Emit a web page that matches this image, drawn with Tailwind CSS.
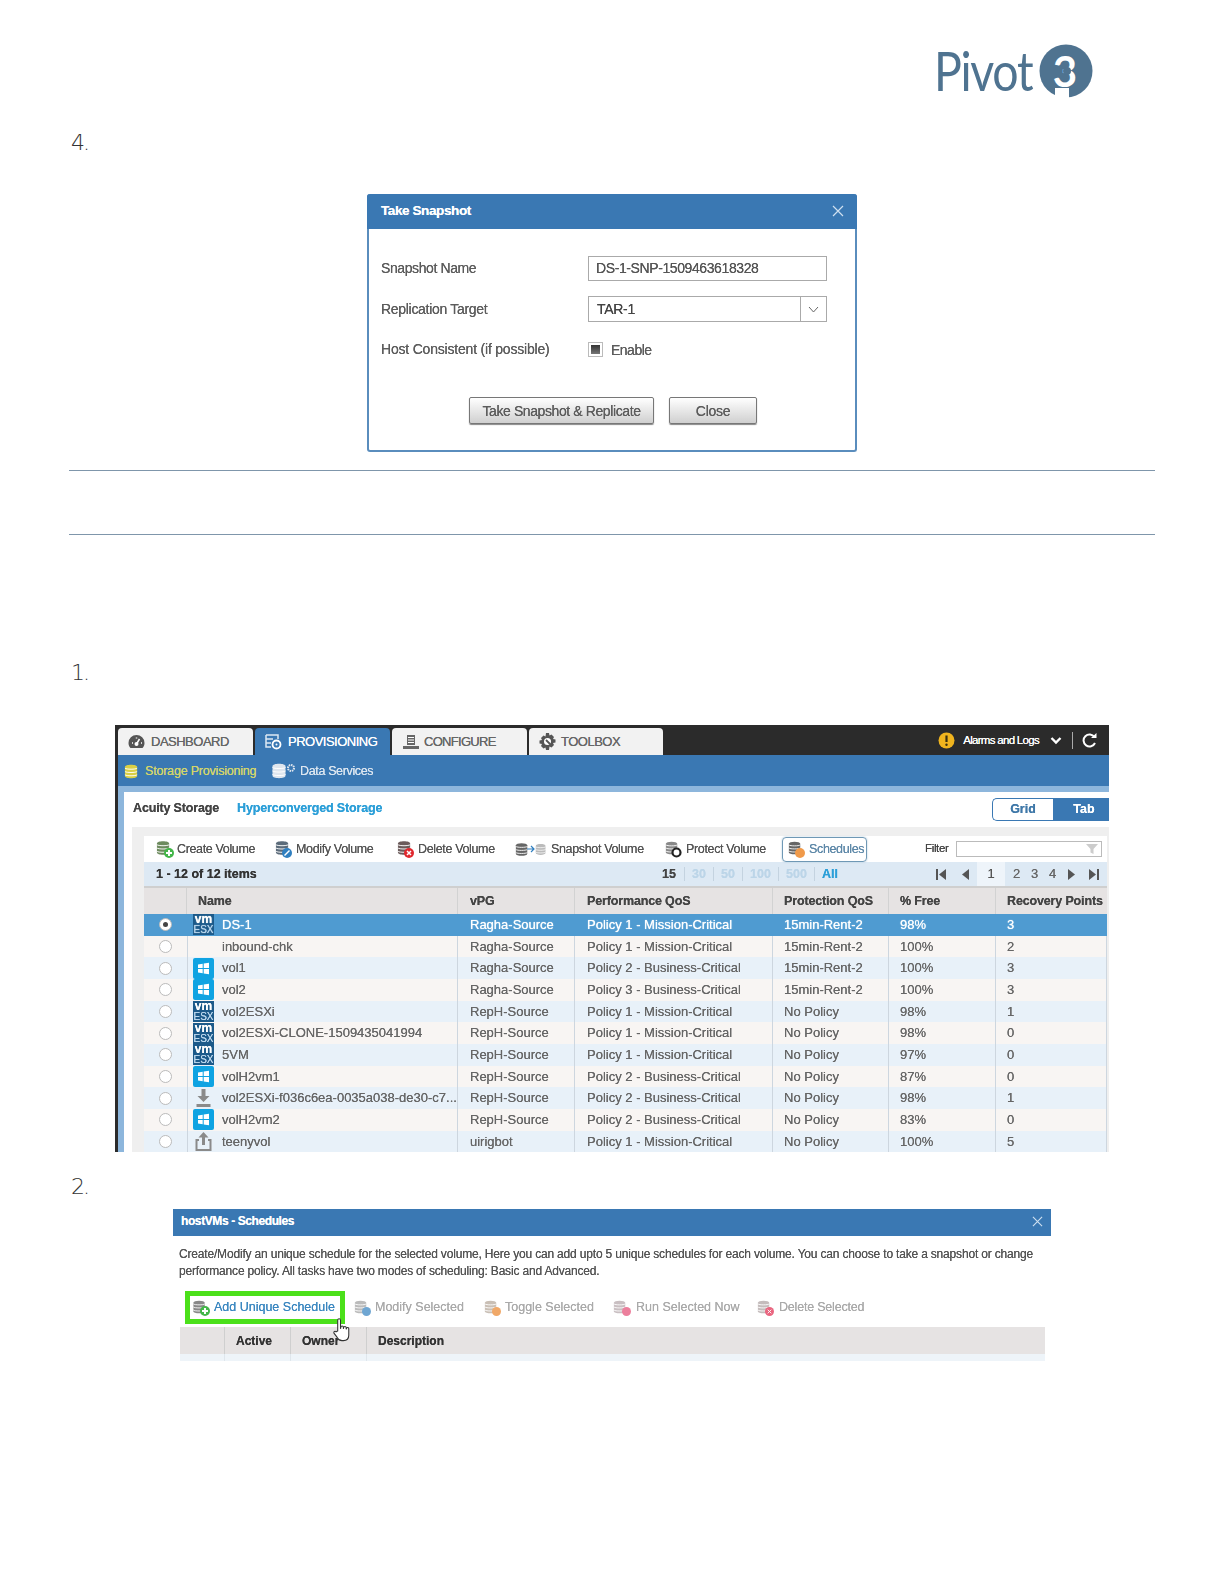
<!DOCTYPE html>
<html lang="en">
<head>
<meta charset="UTF-8">
<title>Pivot3 - Take Snapshot</title>
<script src="https://cdn.jsdelivr.net/npm/@tailwindcss/browser@4"></script>
</head>
<body class="bg-white font-['Liberation_Sans',Arial,sans-serif]">

<!-- shared icon shapes -->
<svg class="hidden" xmlns="http://www.w3.org/2000/svg">
  <symbol id="db" viewBox="0 0 16 16">
    <path fill="currentColor" d="M1 3.200C1 1.700 4 .8 7.500.8S14 1.700 14 3.200v9.600c0 1.500-3 2.400-6.500 2.400S1 14.300 1 12.800z"/>
    <path fill="none" stroke="#fff" stroke-width="1" d="M1 4.500c1.500 1.400 11.500 1.400 13 0M1 8c1.500 1.400 11.500 1.400 13 0M1 11.500c1.500 1.400 11.500 1.400 13 0"/>
  </symbol>
  <symbol id="win" viewBox="0 0 21 21">
    <rect width="21" height="21" rx="2" fill="#0fa3e2"/>
    <path fill="#fff" d="M5 6.500l4.700-.7v4.200H5zM10.700 5.600l5.300-.8v5.200h-5.300zM5 11h4.700v4.200L5 14.500zM10.700 11H16v5.200l-5.300-.8z"/>
  </symbol>
</svg>

<!-- logo -->
<div class="flex justify-end pt-[44px] pr-[131px] h-[98px]">
  <div class="flex items-center h-[54px]">
    <span class="font-['Lato',sans-serif] text-[54px] leading-none text-[#4f7390] tracking-[-1.5px] scale-x-[0.86] origin-right mr-[7px]">Pivot</span>
    <svg class="w-[54px] h-[54px]" viewBox="0 0 54 54">
      <circle cx="27" cy="27" r="26.500" fill="#4f7390"/>
      <rect x="16" y="44" width="14" height="10" fill="#fff"/>
      <text x="26" y="43" text-anchor="middle" font-family="Lato, sans-serif" font-weight="700" font-size="42" fill="#fff">3</text>
      <circle cx="28" cy="27" r="4" fill="#4f7390"/>
    </svg>
  </div>
</div>

<div class="mt-[30px] ml-[71px] h-[30px] text-[22px] leading-[30px] tracking-[-2px] text-[#333] font-['DejaVu_Sans',sans-serif] font-extralight">4.</div>

<!-- take snapshot dialog -->
<div class="mt-[36px] ml-[367px] w-[490px] h-[258px] border-x-2 border-b-2 border-[#5a8dbd] rounded-[3px] blur-[0.35px] text-[#5c5c5c] text-[14px] tracking-[-0.3px] [text-shadow:0_0_0.5px_currentColor]">
  <div class="-mx-[2px] h-[35px] bg-[#3a78b3] rounded-t-[3px] flex items-center justify-between pl-[14px] pr-[13px]">
    <span class="text-white font-bold text-[13.5px] tracking-[-0.4px]">Take Snapshot</span>
    <svg class="w-[12px] h-[12px] -mt-[2px]" viewBox="0 0 12 12"><path d="M1 1l10 10M11 1L1 11" stroke="#cfe0f0" stroke-width="1.200"/></svg>
  </div>
  <div class="pl-[12px]">
    <div class="flex items-center mt-[27px] h-[25px]">
      <span class="w-[207px] tracking-[-0.4px]">Snapshot Name</span>
      <div class="w-[239px] h-[25px] border border-[#aaa] flex items-center pl-[7px] pb-[1px] text-[#555] tracking-[-0.4px]">DS-1-SNP-1509463618328</div>
    </div>
    <div class="flex items-center mt-[15px] h-[26px]">
      <span class="w-[207px]">Replication Target</span>
      <div class="w-[239px] h-[26px] border border-[#aaa] flex items-center pl-[8px] text-[#444]">
        <span class="flex-1">TAR-1</span>
        <div class="w-[26px] h-full border-l border-[#aaa] flex items-center justify-center">
          <svg class="w-[11px] h-[7px]" viewBox="0 0 11 7"><path d="M1 1l4.500 5L10 1" fill="none" stroke="#666"/></svg>
        </div>
      </div>
    </div>
    <div class="flex items-center mt-[20px] h-[15px]">
      <span class="w-[207px] -mt-[1px] tracking-[-0.2px]">Host Consistent (if possible)</span>
      <div class="w-[15px] h-[15px] border border-[#bbb] p-[2px] bg-white"><div class="w-full h-full bg-gradient-to-b from-[#333] to-[#777]"></div></div>
      <span class="ml-[8px] mt-[1px] tracking-[-0.5px]">Enable</span>
    </div>
    <div class="flex mt-[40px]">
      <div class="ml-[88px] w-[185px] h-[27px] pt-[1px] border border-[#777] rounded-[2px] bg-gradient-to-b from-white to-[#d0d0d0] shadow-[0_1px_1px_#888] flex items-center justify-center tracking-[-0.4px]">Take Snapshot &amp; Replicate</div>
      <div class="ml-[15px] w-[88px] h-[27px] pt-[1px] border border-[#777] rounded-[2px] bg-gradient-to-b from-white to-[#d0d0d0] shadow-[0_1px_1px_#888] flex items-center justify-center">Close</div>
    </div>
  </div>
</div>

<div class="mt-[18px] mx-[69px] border-t border-[#7f96ab]"></div>
<div class="mt-[63px] mx-[69px] border-t border-[#7f96ab]"></div>

<div class="mt-[123px] ml-[71px] h-[30px] text-[22px] leading-[30px] tracking-[-2px] text-[#333] font-['DejaVu_Sans',sans-serif] font-extralight">1.</div>

<!-- provisioning screenshot -->
<div class="mt-[37px] ml-[115px] w-[994px] h-[427px] border-l-[3px] border-[#2b2b2b] flex flex-col overflow-hidden blur-[0.35px] text-[13px] text-[#555] [text-shadow:0_0_0.5px_currentColor]">
  <div class="h-[30px] shrink-0 bg-[#2b2b2b] flex items-end text-[13px] tracking-[-0.5px] text-[#666]">
    <div class="w-[135px] h-[27px] bg-[#f2f2f2] rounded-t-[4px] flex items-center pl-[10px] gap-[6px]">
      <svg class="w-[17px] h-[15px]" viewBox="0 0 17 15"><path fill="#555" d="M8.500 1a8 8 0 0 0-8 8c0 2 .7 3.800 2 5h12c1.300-1.200 2-3 2-5a8 8 0 0 0-8-8z"/><path stroke="#fff" stroke-width="1.500" d="M8.500 10l3-5M4 9h1M13 9h1M8.500 3.500v1"/><circle cx="8.500" cy="10" r="2" fill="#fff"/></svg>
      <span>DASHBOARD</span>
    </div>
    <div class="ml-[2px] w-[135px] h-[27px] bg-[#3a78b3] rounded-t-[4px] flex items-center pl-[10px] gap-[6px] text-white">
      <svg class="w-[17px] h-[16px]" viewBox="0 0 17 16"><path fill="none" stroke="#dce8f3" stroke-width="1.500" d="M1 1h12v4M1 1v12h5M1 5h7M1 9h5"/><circle cx="11.500" cy="10.500" r="4" fill="none" stroke="#fff" stroke-width="1.800"/><circle cx="11.500" cy="10.500" r="1" fill="#fff"/></svg>
      <span>PROVISIONING</span>
    </div>
    <div class="ml-[2px] w-[135px] h-[27px] bg-[#f2f2f2] rounded-t-[4px] flex items-center pl-[10px] gap-[5px]">
      <svg class="w-[17px] h-[16px]" viewBox="0 0 17 16"><path fill="#666" d="M5 1h8v10H5zM1 12h16v3H1z"/><path stroke="#fff" d="M6 3.500h6M6 6h6M6 8.500h6"/></svg>
      <span class="tracking-[-0.7px]">CONFIGURE</span>
    </div>
    <div class="ml-[2px] w-[134px] h-[27px] bg-[#f2f2f2] rounded-t-[4px] flex items-center pl-[10px] gap-[5px]">
      <svg class="w-[17px] h-[17px]" viewBox="0 0 17 17"><path fill="#555" d="M7 0h3l.5 2.500 2-1 2.500 2.500-1 2 2.500.5v3l-2.500.5 1 2-2.500 2.500-2-1L10 17H7l-.5-2.500-2 1L2 13l1-2-2.500-.5v-3L3 7 2 5l2.500-2.500 2 1z"/><circle cx="8.500" cy="8.500" r="3.500" fill="#fff"/><path stroke="#555" stroke-width="1.800" d="M7 7l5 5"/></svg>
      <span>TOOLBOX</span>
    </div>
    <div class="flex-1 h-full flex items-center justify-end text-white text-[11.500px] tracking-[-0.7px] pr-[12px]">
      <svg class="w-[17px] h-[17px]" viewBox="0 0 17 17"><circle cx="8.500" cy="8.500" r="8" fill="#f0b41e"/><path stroke="#3a2f10" stroke-width="2.200" d="M8.500 3.500v6.500"/><circle cx="8.500" cy="12.800" r="1.200" fill="#3a2f10"/></svg>
      <span class="ml-[8px] mt-[1px]">Alarms and Logs</span>
      <svg class="ml-[11px] w-[12px] h-[9px]" viewBox="0 0 12 9"><path d="M1.500 2L6 6.500 10.500 2" fill="none" stroke="#fff" stroke-width="2.400"/></svg>
      <div class="ml-[10px] w-px h-[17px] bg-[#aaa]"></div>
      <svg class="ml-[9px] w-[15px] h-[15px]" viewBox="0 0 15 15"><path d="M12.500 4A6 6 0 1 0 13 10" fill="none" stroke="#fff" stroke-width="2"/><path fill="#fff" d="M9 5h5.500V0z"/></svg>
    </div>
  </div>
  <div class="h-[31px] shrink-0 bg-[#3a78b3] flex items-center pl-[6px] pt-[1px] text-[12.5px] tracking-[-0.2px]">
    <svg class="w-[15px] h-[17px] text-[#d9cf45]"><use href="#db"/></svg>
    <span class="ml-[6px] w-[125px] text-[#d3d56b]">Storage Provisioning</span>
    <svg class="w-[19px] h-[16px] text-[#dfe6ee]"><use href="#db"/></svg>
    <svg class="-ml-[3px] -mt-[6px] w-[10px] h-[10px]" viewBox="0 0 10 10"><circle cx="5" cy="5" r="3" fill="none" stroke="#dfe6ee" stroke-width="2" stroke-dasharray="1.500 .8"/></svg>
    <span class="ml-[4px] tracking-[-0.35px] text-[#dce6f0]">Data Services</span>
  </div>
  <div class="h-[6px] shrink-0 bg-[#8db6dc]"></div>
  <div class="flex-1 flex min-h-0">
    <div class="w-[6px] bg-[#8db6dc]"></div>
    <div class="flex-1 bg-white flex flex-col min-w-0">
      <div class="h-[35px] shrink-0 flex items-center pl-[9px] font-bold text-[12.5px]">
        <span class="-mt-[3px] tracking-[-0.15px] text-[#444] w-[104px]">Acuity Storage</span>
        <span class="-mt-[3px] tracking-[-0.15px] text-[#2c9fd8]">Hyperconverged Storage</span>
        <div class="ml-auto flex h-[23px] text-[#3f78a8]">
          <div class="w-[61px] border border-r-0 border-[#3a78b3] rounded-l-[5px] flex items-center justify-center">Grid</div>
          <div class="w-[56px] pl-[6px] bg-[#3a78b3] text-white flex items-center justify-center">Tab</div>
        </div>
      </div>
      <div class="flex-1 bg-[#efefef] ml-[8px] pl-[12px] pr-[2px] pt-[9px] min-h-0">
        <div class="h-[26px] bg-white flex items-center pl-[12px] text-[#555] text-[12.5px] tracking-[-0.35px]">
          <div class="w-[119px] flex items-center gap-[3px]"><span class="relative w-[18px] h-[18px]"><svg class="w-[15px] h-[16px] text-[#6d8a5e]"><use href="#db"/></svg><svg class="absolute right-0 bottom-0 w-[10px] h-[10px]" viewBox="0 0 10 10"><circle cx="5" cy="5" r="5" fill="#43b649"/><path stroke="#fff" stroke-width="2" d="M5 2v6M2 5h6"/></svg></span>Create Volume</div>
          <div class="w-[122px] flex items-center gap-[4px]"><span class="relative w-[17px] h-[18px]"><svg class="w-[15px] h-[16px] text-[#5b6b7a]"><use href="#db"/></svg><svg class="absolute right-0 bottom-0 w-[10px] h-[10px]" viewBox="0 0 10 10"><circle cx="5" cy="5" r="5" fill="#2f7fc0"/><path stroke="#fff" stroke-width="1.500" d="M2.500 7.500l5-5"/></svg></span>Modify Volume</div>
          <div class="w-[118px] flex items-center gap-[4px]"><span class="relative w-[17px] h-[18px]"><svg class="w-[15px] h-[16px] text-[#6b5b5b]"><use href="#db"/></svg><svg class="absolute right-0 bottom-0 w-[10px] h-[10px]" viewBox="0 0 10 10"><circle cx="5" cy="5" r="5" fill="#e0282e"/><path stroke="#fff" stroke-width="1.500" d="M3 3l4 4M7 3l-4 4"/></svg></span>Delete Volume</div>
          <div class="w-[150px] flex items-center gap-[4px]"><span class="flex items-center w-[32px] h-[18px]"><svg class="w-[14px] h-[15px] text-[#666]"><use href="#db"/></svg><svg class="w-[8px] h-[8px] -ml-[2px]" viewBox="0 0 8 8"><path d="M0 4h7M4 1l3 3-3 3" fill="none" stroke="#2f7fc0" stroke-width="1.200"/></svg><svg class="w-[12px] h-[15px] text-[#bbb]"><use href="#db"/></svg></span>Snapshot Volume</div>
          <div class="w-[117px] flex items-center gap-[4px]"><span class="relative w-[17px] h-[18px]"><svg class="w-[14px] h-[16px] text-[#888]"><use href="#db"/></svg><svg class="absolute right-0 bottom-0 w-[11px] h-[11px]" viewBox="0 0 11 11"><circle cx="5.500" cy="5.500" r="4" fill="#fff" stroke="#222" stroke-width="2.200"/></svg></span>Protect Volume</div>
          <div class="w-[85px] h-[25px] border border-[#6f98b5] rounded-[4px] flex items-center pl-[5px] gap-[4px] text-[#5e88a8] shadow-[0_0_2px_#a9c4d8]"><span class="relative w-[17px] h-[18px]"><svg class="w-[14px] h-[16px] text-[#666]"><use href="#db"/></svg><svg class="absolute right-0 bottom-0 w-[10px] h-[10px]" viewBox="0 0 10 10"><circle cx="5" cy="5" r="5" fill="#f09a4a"/></svg></span>Schedules</div>
          <span class="ml-[58px] text-[11.500px] text-[#444]">Filter</span>
          <div class="ml-[8px] w-[146px] h-[16px] border border-[#bbb] flex items-center justify-end pr-[3px]">
            <svg class="w-[12px] h-[12px]" viewBox="0 0 12 12"><path fill="#ccc" d="M0 1h12L7.500 6v5l-3-1.500V6z"/></svg>
          </div>
        </div>
        <div class="h-[26px] bg-[#dde9f4] border-b-2 border-[#cfcfcf] flex items-center font-bold text-[12.5px] text-[#bcd5e8]">
          <span class="w-[518px] pl-[12px] text-[#333]">1 - 12 of 12 items</span>
          <span class="w-[22px] text-[#444]">15</span>
          <i class="w-px h-[14px] mr-[7px] bg-[#c4d3e0]"></i>
          <span class="w-[21px]">30</span>
          <i class="w-px h-[14px] mr-[7px] bg-[#c4d3e0]"></i>
          <span class="w-[21px]">50</span>
          <i class="w-px h-[14px] mr-[7px] bg-[#c4d3e0]"></i>
          <span class="w-[28px]">100</span>
          <i class="w-px h-[14px] mr-[7px] bg-[#c4d3e0]"></i>
          <span class="w-[28px]">500</span>
          <i class="w-px h-[14px] mr-[7px] bg-[#c4d3e0]"></i>
          <span class="w-[114px] text-[#2c9fd8]">All</span>
          <svg class="w-[10px] h-[11px]" viewBox="0 0 10 11"><path fill="#555" d="M0 0h2v11H0zM10 0v11L3 5.500z"/></svg>
          <svg class="ml-[16px] w-[7px] h-[11px]" viewBox="0 0 7 11"><path fill="#555" d="M7 0v11L0 5.500z"/></svg>
          <div class="ml-[8px] w-[28px] h-[24px] bg-[#eef4fa] text-[#555] font-normal flex items-center justify-center text-[13px]">1</div>
          <div class="ml-[8px] w-[18px] text-[#666] font-normal text-[13px]">2</div>
          <div class="w-[18px] text-[#666] font-normal text-[13px]">3</div>
          <div class="w-[19px] text-[#666] font-normal text-[13px]">4</div>
          <svg class="w-[7px] h-[11px]" viewBox="0 0 7 11"><path fill="#555" d="M0 0v11l7-5.500z"/></svg>
          <svg class="ml-[14px] w-[10px] h-[11px]" viewBox="0 0 10 11"><path fill="#555" d="M0 0v11l7-5.500zM8 0h2v11H8z"/></svg>
        </div>
        <div class="h-[26px] bg-[#e6e3e3] grid grid-cols-[43px_271px_117px_198px_116px_107px_111px] items-center font-bold text-[12.5px] tracking-[-0.15px] text-[#444]">
          <div class="h-full border-r border-[#d2d2d2]"></div>
          <div class="h-full border-r border-[#d2d2d2] pl-[11px] flex items-center">Name</div>
          <div class="h-full border-r border-[#d2d2d2] pl-[12px] flex items-center">vPG</div>
          <div class="h-full border-r border-[#d2d2d2] pl-[12px] flex items-center">Performance QoS</div>
          <div class="h-full border-r border-[#d2d2d2] pl-[11px] flex items-center">Protection QoS</div>
          <div class="h-full border-r border-[#d2d2d2] pl-[11px] flex items-center">% Free</div>
          <div class="h-full pl-[11px] flex items-center">Recovery Points</div>
        </div>
        <div id="rows"></div>
      </div>
    </div>
  </div>
</div>

<div class="mt-[20px] ml-[71px] h-[30px] text-[22px] leading-[30px] tracking-[-2px] text-[#333] font-['DejaVu_Sans',sans-serif] font-extralight">2.</div>

<!-- schedules dialog screenshot -->
<div class="mt-[7px] ml-[173px] w-[878px] blur-[0.35px] text-[12.5px] text-[#555] [text-shadow:0_0_0.4px_currentColor]">
  <div class="h-[27px] bg-[#3a78b3] flex items-center justify-between pl-[8px] pr-[8px]">
    <span class="text-white font-bold text-[12px] tracking-[-0.4px] -mt-[3px]">hostVMs - Schedules</span>
    <svg class="w-[11px] h-[11px] -mt-[2px]" viewBox="0 0 12 12"><path d="M1 1l10 10M11 1L1 11" stroke="#cfe0f0" stroke-width="1.200"/></svg>
  </div>
  <p class="mt-[10px] ml-[6px] text-[12px] tracking-[-0.18px] whitespace-nowrap leading-[17px] text-[#555]">Create/Modify an unique schedule for the selected volume, Here you can add upto 5 unique schedules for each volume. You can choose to take a snapshot or change<br>performance policy. All tasks have two modes of scheduling: Basic and Advanced.</p>
  <div class="relative mt-[11px] ml-[12px] h-[33px] flex items-center text-[#aaa]">
    <div class="w-[160px] h-[33px] border-[5px] border-[#4be01a] flex items-center pl-[2px] gap-[4px] text-[#3a87c0]">
      <span class="relative w-[18px] h-[16px]"><svg class="w-[15px] h-[14px] text-[#888]"><use href="#db"/></svg><svg class="absolute right-0 bottom-0 w-[10px] h-[10px]" viewBox="0 0 10 10"><circle cx="5" cy="5" r="5" fill="#43b649"/><path stroke="#fff" stroke-width="2" d="M5 2v6M2 5h6"/></svg></span>
      <span>Add Unique Schedule</span>
    </div>
    <div class="ml-[9px] w-[130px] flex items-center gap-[4px]"><span class="relative w-[17px] h-[16px]"><svg class="w-[14px] h-[14px] text-[#bbb]"><use href="#db"/></svg><svg class="absolute right-0 bottom-0 w-[9px] h-[9px]" viewBox="0 0 10 10"><circle cx="5" cy="5" r="5" fill="#6fa6d2"/></svg></span>Modify Selected</div>
    <div class="w-[129px] flex items-center gap-[4px]"><span class="relative w-[17px] h-[16px]"><svg class="w-[14px] h-[14px] text-[#c9bfb5]"><use href="#db"/></svg><svg class="absolute right-0 bottom-0 w-[9px] h-[9px]" viewBox="0 0 10 10"><circle cx="5" cy="5" r="5" fill="#f0a868"/></svg></span>Toggle Selected</div>
    <div class="w-[144px] flex items-center gap-[5px]"><span class="relative w-[18px] h-[16px]"><svg class="w-[14px] h-[14px] text-[#c9bfc2]"><use href="#db"/></svg><svg class="absolute right-0 bottom-0 w-[9px] h-[9px]" viewBox="0 0 10 10"><circle cx="5" cy="5" r="5" fill="#ec7f9c"/></svg></span>Run Selected Now</div>
    <div class="flex items-center gap-[5px] tracking-[-0.2px]"><span class="relative w-[17px] h-[16px]"><svg class="w-[14px] h-[14px] text-[#c4bcbc]"><use href="#db"/></svg><svg class="absolute right-0 bottom-0 w-[9px] h-[9px]" viewBox="0 0 10 10"><circle cx="5" cy="5" r="5" fill="#e9657f"/><path stroke="#fff" d="M3 3l4 4M7 3l-4 4"/></svg></span>Delete Selected</div>
    <svg class="absolute left-[146px] top-[26px] z-10 w-[22px] h-[29px]" viewBox="0 0 20 27"><path fill="#fff" stroke="#333" d="M6 13V3a1.300 1.300 0 0 1 2.600 0v8l.3-1.500a1.200 1.200 0 0 1 2.400 0V11l.2-1a1.200 1.200 0 0 1 2.400 0v1.500l.2-.7a1.100 1.100 0 0 1 2.200.2v6c0 3-2 5-5 5H10c-2 0-3.500-1-4.500-3L2.500 15c-.6-1.300 1-2.300 2-1.200z"/></svg>
  </div>
  <div class="mt-[3px] ml-[7px] w-[865px] h-[27px] bg-[#e6e3e3] flex items-center font-bold text-[#333] text-[12px]">
    <div class="w-[45px] h-full border-r border-[#cfcfcf]"></div>
    <div class="w-[66px] h-full border-r border-[#cfcfcf] pl-[11px] flex items-center">Active</div>
    <div class="w-[76px] h-full border-r border-[#cfcfcf] pl-[11px] flex items-center">Owner</div>
    <div class="pl-[11px]">Description</div>
  </div>
  <div class="ml-[7px] w-[865px] h-[7px] bg-[#eef4f9] flex">
    <div class="w-[45px] h-full border-r border-[#dfe6ec]"></div>
    <div class="w-[66px] h-full border-r border-[#dfe6ec]"></div>
    <div class="w-[76px] h-full border-r border-[#dfe6ec]"></div>
  </div>
</div>

<script>
  const vmIcon = `<span class="w-[21px] h-[21px] bg-[#1c5a8a] text-white flex flex-col items-center"><b class="text-[12px] leading-[10px]">vm</b><span class="text-[10px] leading-[11px] text-[#bcd8ee]">ESX</span></span>`;
  const winIcon = `<svg class="w-[21px] h-[21px]"><use href="#win"/></svg>`;
  const downIcon = `<svg class="w-[21px] h-[21px]" viewBox="0 0 21 21"><path fill="#8a8a8a" d="M8.500 1h4v7h4l-6 6-6-6h4zM3.500 16h14v3h-14z"/></svg>`;
  const upIcon = `<svg class="w-[21px] h-[21px]" viewBox="0 0 21 21"><path fill="none" stroke="#8a8a8a" stroke-width="2" d="M6 9H3.500v10h14V9H15"/><path fill="#8a8a8a" d="M10.500 1l5 5.500H12V14H9V6.500H5.500z"/></svg>`;

  const rows = [
    ['vm', 'DS-1', 'Ragha-Source', 'Policy 1 - Mission-Critical', '15min-Rent-2', '98%', '3'],
    ['', 'inbound-chk', 'Ragha-Source', 'Policy 1 - Mission-Critical', '15min-Rent-2', '100%', '2'],
    ['win', 'vol1', 'Ragha-Source', 'Policy 2 - Business-Critical', '15min-Rent-2', '100%', '3'],
    ['win', 'vol2', 'Ragha-Source', 'Policy 3 - Business-Critical', '15min-Rent-2', '100%', '3'],
    ['vm', 'vol2ESXi', 'RepH-Source', 'Policy 1 - Mission-Critical', 'No Policy', '98%', '1'],
    ['vm', 'vol2ESXi-CLONE-1509435041994', 'RepH-Source', 'Policy 1 - Mission-Critical', 'No Policy', '98%', '0'],
    ['vm', '5VM', 'RepH-Source', 'Policy 1 - Mission-Critical', 'No Policy', '97%', '0'],
    ['win', 'volH2vm1', 'RepH-Source', 'Policy 2 - Business-Critical', 'No Policy', '87%', '0'],
    ['down', 'vol2ESXi-f036c6ea-0035a038-de30-c7...', 'RepH-Source', 'Policy 2 - Business-Critical', 'No Policy', '98%', '1'],
    ['win', 'volH2vm2', 'RepH-Source', 'Policy 2 - Business-Critical', 'No Policy', '83%', '0'],
    ['up', 'teenyvol', 'uirigbot', 'Policy 1 - Mission-Critical', 'No Policy', '100%', '5'],
  ];
  const icons = { vm: vmIcon, win: winIcon, down: downIcon, up: upIcon, '': '' };

  document.getElementById('rows').innerHTML = rows.map((r, i) => {
    const selected = i === 0;
    const bg = selected ? 'bg-[#4f9bd1] text-white [text-shadow:0_0_1px_currentColor]' : (i % 2 ? 'bg-[#f8f5f3] text-[#666]' : 'bg-[#e8f1f9] text-[#666]');
    const line = selected ? 'border-[#4f9bd1]' : 'border-[#cdd6df]';
    const dot = selected ? '<span class="w-[5px] h-[5px] rounded-full bg-[#444]"></span>' : '';
    return `<div class="h-[21.67px] grid grid-cols-[43px_271px_117px_198px_116px_107px_111px] items-center ${bg}">
      <div class="flex justify-center"><span class="w-[13px] h-[13px] rounded-full bg-white border border-[#bbb] flex items-center justify-center">${dot}</span></div>
      <div class="h-full border-x ${line} pl-[5px] flex items-center gap-[8px]"><span class="w-[21px] h-[21px] shrink-0">${icons[r[0]]}</span><span class="whitespace-nowrap">${r[1]}</span></div>
      <div class="h-full border-r ${line} pl-[12px] flex items-center">${r[2]}</div>
      <div class="h-full border-r ${line} pl-[12px] flex items-center">${r[3]}</div>
      <div class="h-full border-r ${line} pl-[11px] flex items-center">${r[4]}</div>
      <div class="h-full border-r ${line} pl-[11px] flex items-center">${r[5]}</div>
      <div class="h-full border-r ${line} pl-[11px] flex items-center">${r[6]}</div>
    </div>`;
  }).join('');
</script>
</body>
</html>
